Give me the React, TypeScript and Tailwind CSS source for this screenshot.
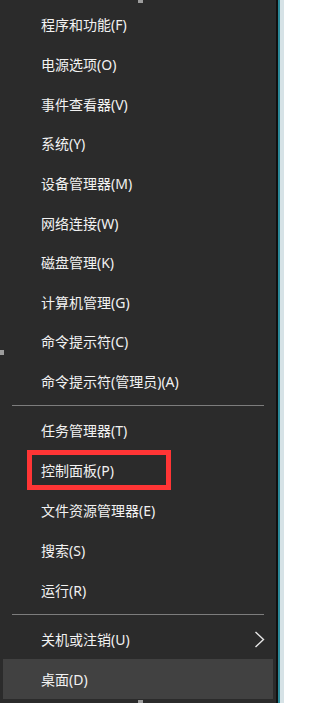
const firstGroup = [
  "程序和功能(F)",
  "电源选项(O)",
  "事件查看器(V)",
  "系统(Y)",
  "设备管理器(M)",
  "网络连接(W)",
  "磁盘管理(K)",
  "计算机管理(G)",
  "命令提示符(C)",
  "命令提示符(管理员)(A)",
];

const secondGroup = ["任务管理器(T)", "控制面板(P)", "文件资源管理器(E)", "搜索(S)", "运行(R)"];

const font = { fontFamily: '"Noto Sans", "Noto Sans CJK SC", sans-serif' };

function Separator() {
  return (
    <div className="h-[9px] pt-[4px] px-[9px]">
      <div className="h-px bg-[#7d7d7d]" />
    </div>
  );
}

export default function App() {
  return (
    <div className="relative flex h-[703px] w-[284px] bg-[#2b2b2b]" style={font}>
      {/* menu body */}
      <div className="flex w-[276px] flex-col px-[3px] pt-[5px] text-[14px] text-[#f2f2f2]">
        {firstGroup.map((label) => (
          <div key={label} className="flex h-[39.65px] items-center pl-[38px]">
            {label}
          </div>
        ))}

        <Separator />

        {secondGroup.map((label) => (
          <div key={label} className="flex h-10 items-center pl-[38px]">
            {label}
          </div>
        ))}

        <Separator />

        <div className="flex h-10 items-center justify-between pl-[38px] pr-[8px]">
          <span>关机或注销(U)</span>
          <svg width="11" height="17" viewBox="0 0 11 17" fill="none">
            <path d="M1.5 1 L9.5 8.5 L1.5 16" stroke="#e6e6e6" strokeWidth="1.4" />
          </svg>
        </div>
        <div className="flex h-10 items-center bg-[#414141] pl-[38px]">桌面(D)</div>
      </div>

      {/* window edge on the right */}
      <div className="w-[2px] bg-[#111]" />
      <div className="w-[2px] bg-[#2b8a9a]" />
      <div className="w-[4px] bg-[#d6e2e6]" />

      {/* highlight box around 控制面板 */}
      <div className="pointer-events-none absolute left-[27px] top-[450px] h-[40px] w-[144px] border-[5px] border-[#ff3535]" />

      {/* image resize handles */}
      <div className="absolute left-[138px] top-0 h-[3px] w-[5px] bg-[#9d9d9d]" />
      <div className="absolute left-0 top-[350px] h-[5px] w-[4px] bg-[#9d9d9d]" />
      <div className="absolute bottom-0 left-[138px] h-[3px] w-[5px] bg-[#9d9d9d]" />
    </div>
  );
}
